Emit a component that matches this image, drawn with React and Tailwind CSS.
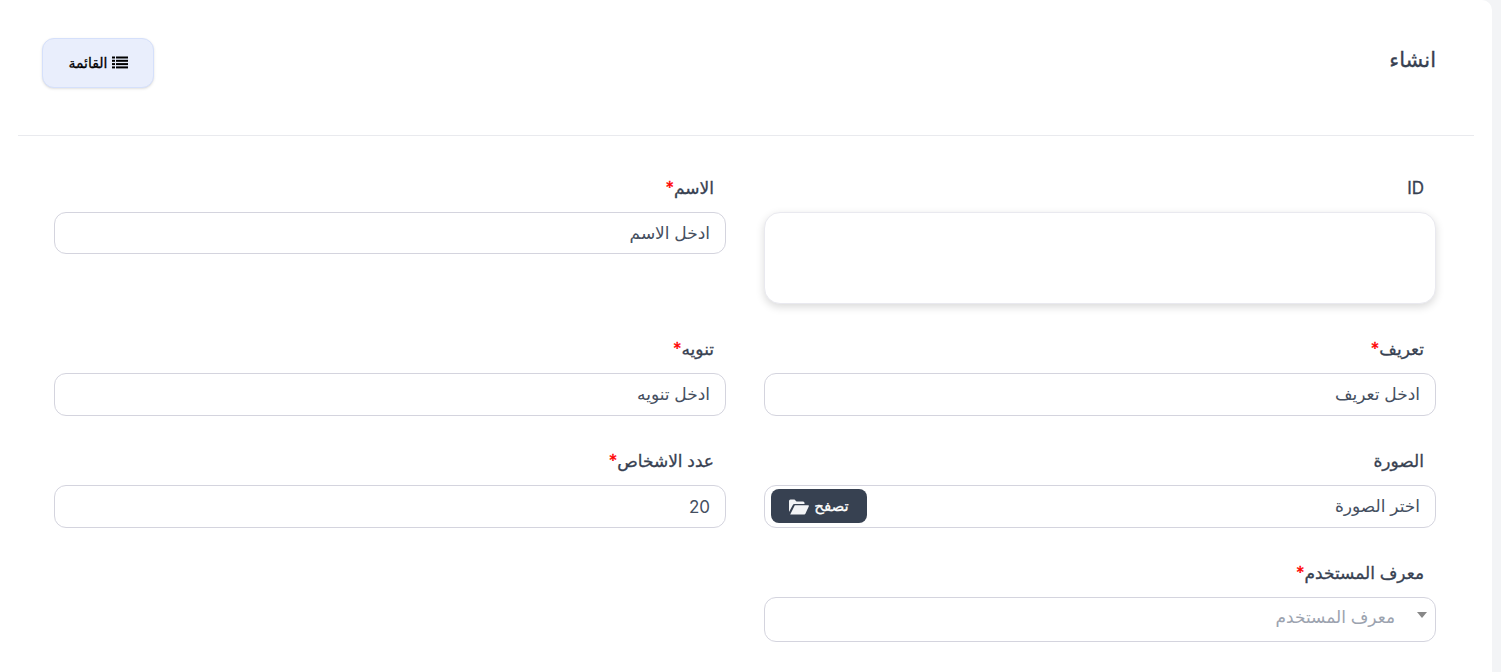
import React from 'react';

const inputClass = "w-full rounded-[12px] border border-[#d4d4de] bg-white px-[15px] text-[17px] text-[#454f5f] placeholder:text-[#454f5f] outline-none";

const Label = ({ text, required }) => (
    <label className="block h-[36px] px-[12px] text-[17px] font-normal leading-[24px] text-[#374151] [-webkit-text-stroke:0.3px_#374151]">
        {text}
        {required && <span className="text-[#ff0000] [-webkit-text-stroke:0.3px_#ff0000]">*</span>}
    </label>
);

const Field = ({ label, required, children, className = "" }) => (
    <div className={className}>
        <Label text={label} required={required} />
        {children}
    </div>
);

const ListIcon = () => (
    <svg viewBox="0 0 16 13" className="h-[13px] w-[16px]" fill="currentColor">
        <rect x="0" y="0.5" width="3" height="2" />
        <rect x="0" y="3.8" width="3" height="2" />
        <rect x="0" y="7.1" width="3" height="2" />
        <rect x="0" y="10.4" width="3" height="2" />
        <rect x="4" y="0.5" width="12" height="2" />
        <rect x="4" y="3.8" width="12" height="2" />
        <rect x="4" y="7.1" width="12" height="2" />
        <rect x="4" y="10.4" width="12" height="2" />
    </svg>
);

const FolderIcon = () => (
    <svg viewBox="0 0 20 16" className="h-[16px] w-[20px]" fill="currentColor">
        <path d="M0 13V2a1.5 1.5 0 0 1 1.5-1.5h4l2 2h6.5A1.5 1.5 0 0 1 15.500 4v1H5.500a2 2 0 0 0-1.800 1.200L0 13z" />
        <path d="M5.800 6.300H19.300a.6.600 0 0 1 .55.85L16.400 14.800a1.200 1.200 0 0 1-1.100.7H1.200z" />
    </svg>
);

const App = () => {
    return (
        <div dir="rtl" className="h-[672px] overflow-hidden bg-[#f3f4f6] font-['Inter','DejaVu_Sans',sans-serif]">
            <div className="mr-auto h-[672px] w-[1492px] rounded-tr-[10px] bg-white px-[18px]">
                {/* Header */}
                <div className="flex h-[136px] items-start justify-between border-b border-[#e9eaee] pl-[24px] pr-[38px] pt-[38px]">
                    <h1 className="mt-[6px] text-[21px] font-normal leading-[32px] text-[#374151] [-webkit-text-stroke:0.3px_#374151]">انشاء</h1>
                    <button className="flex h-[50px] w-[112px] items-center justify-center gap-[4px] rounded-[12px] border border-[#d5e0fb] bg-[#e9eefc] pb-[2px] text-[14px] font-normal text-black shadow-sm [-webkit-text-stroke:0.3px_#000]">
                        <ListIcon />
                        <span>القائمة</span>
                    </button>
                </div>

                {/* Form */}
                <div className="grid grid-cols-[672px_672px] gap-x-[38px] pl-[36px] pr-[38px] pt-[40px]">
                    <Field label="ID" className="h-[161px]">
                        <div className="h-[92px] w-full rounded-[16px] border border-[#e9e9ef] bg-white shadow-[0_3px_8px_rgba(0,0,0,0.15)]"></div>
                    </Field>
                    <Field label="الاسم" required>
                        <input className={`h-[42px] ${inputClass}`} placeholder="ادخل الاسم" />
                    </Field>

                    <Field label="تعريف" required className="h-[112px]">
                        <input className={`h-[43px] pb-[2px] ${inputClass}`} placeholder="ادخل تعريف" />
                    </Field>
                    <Field label="تنويه" required>
                        <input className={`h-[43px] pb-[2px] ${inputClass}`} placeholder="ادخل تنويه" />
                    </Field>

                    <Field label="الصورة" className="h-[112px]">
                        <div className="flex h-[43px] w-full items-center justify-between rounded-[12px] border border-[#d4d4de] bg-white pl-[6px] pr-[15px]">
                            <span className="text-[17px] text-[#454f5f]">اختر الصورة</span>
                            <button className="-mt-[2px] flex h-[34px] w-[96px] items-center justify-center gap-[5px] rounded-[8px] bg-[#374151] pt-[2px] text-[15px] font-normal text-white [-webkit-text-stroke:0.3px_#fff]">
                                <span>تصفح</span>
                                <span className="text-[#f3f4f6] [-webkit-text-stroke:0]">
                                    <FolderIcon />
                                </span>
                            </button>
                        </div>
                    </Field>
                    <Field label="عدد الاشخاص" required>
                        <input className={`h-[43px] ${inputClass}`} defaultValue="20" />
                    </Field>

                    <Field label="معرف المستخدم" required>
                        <div className="relative flex h-[45px] w-full items-center rounded-[12px] border border-[#d4d4de] bg-white pb-[4px] pr-[40px] text-[17px] text-[#9ca3af]">
                            <span>معرف المستخدم</span>
                            <span className="absolute right-[8px] top-[14px] h-0 w-0 border-x-[5px] border-t-[6px] border-x-transparent border-t-[#888888]"></span>
                        </div>
                    </Field>
                </div>
            </div>
        </div>
    );
};

export default App;
